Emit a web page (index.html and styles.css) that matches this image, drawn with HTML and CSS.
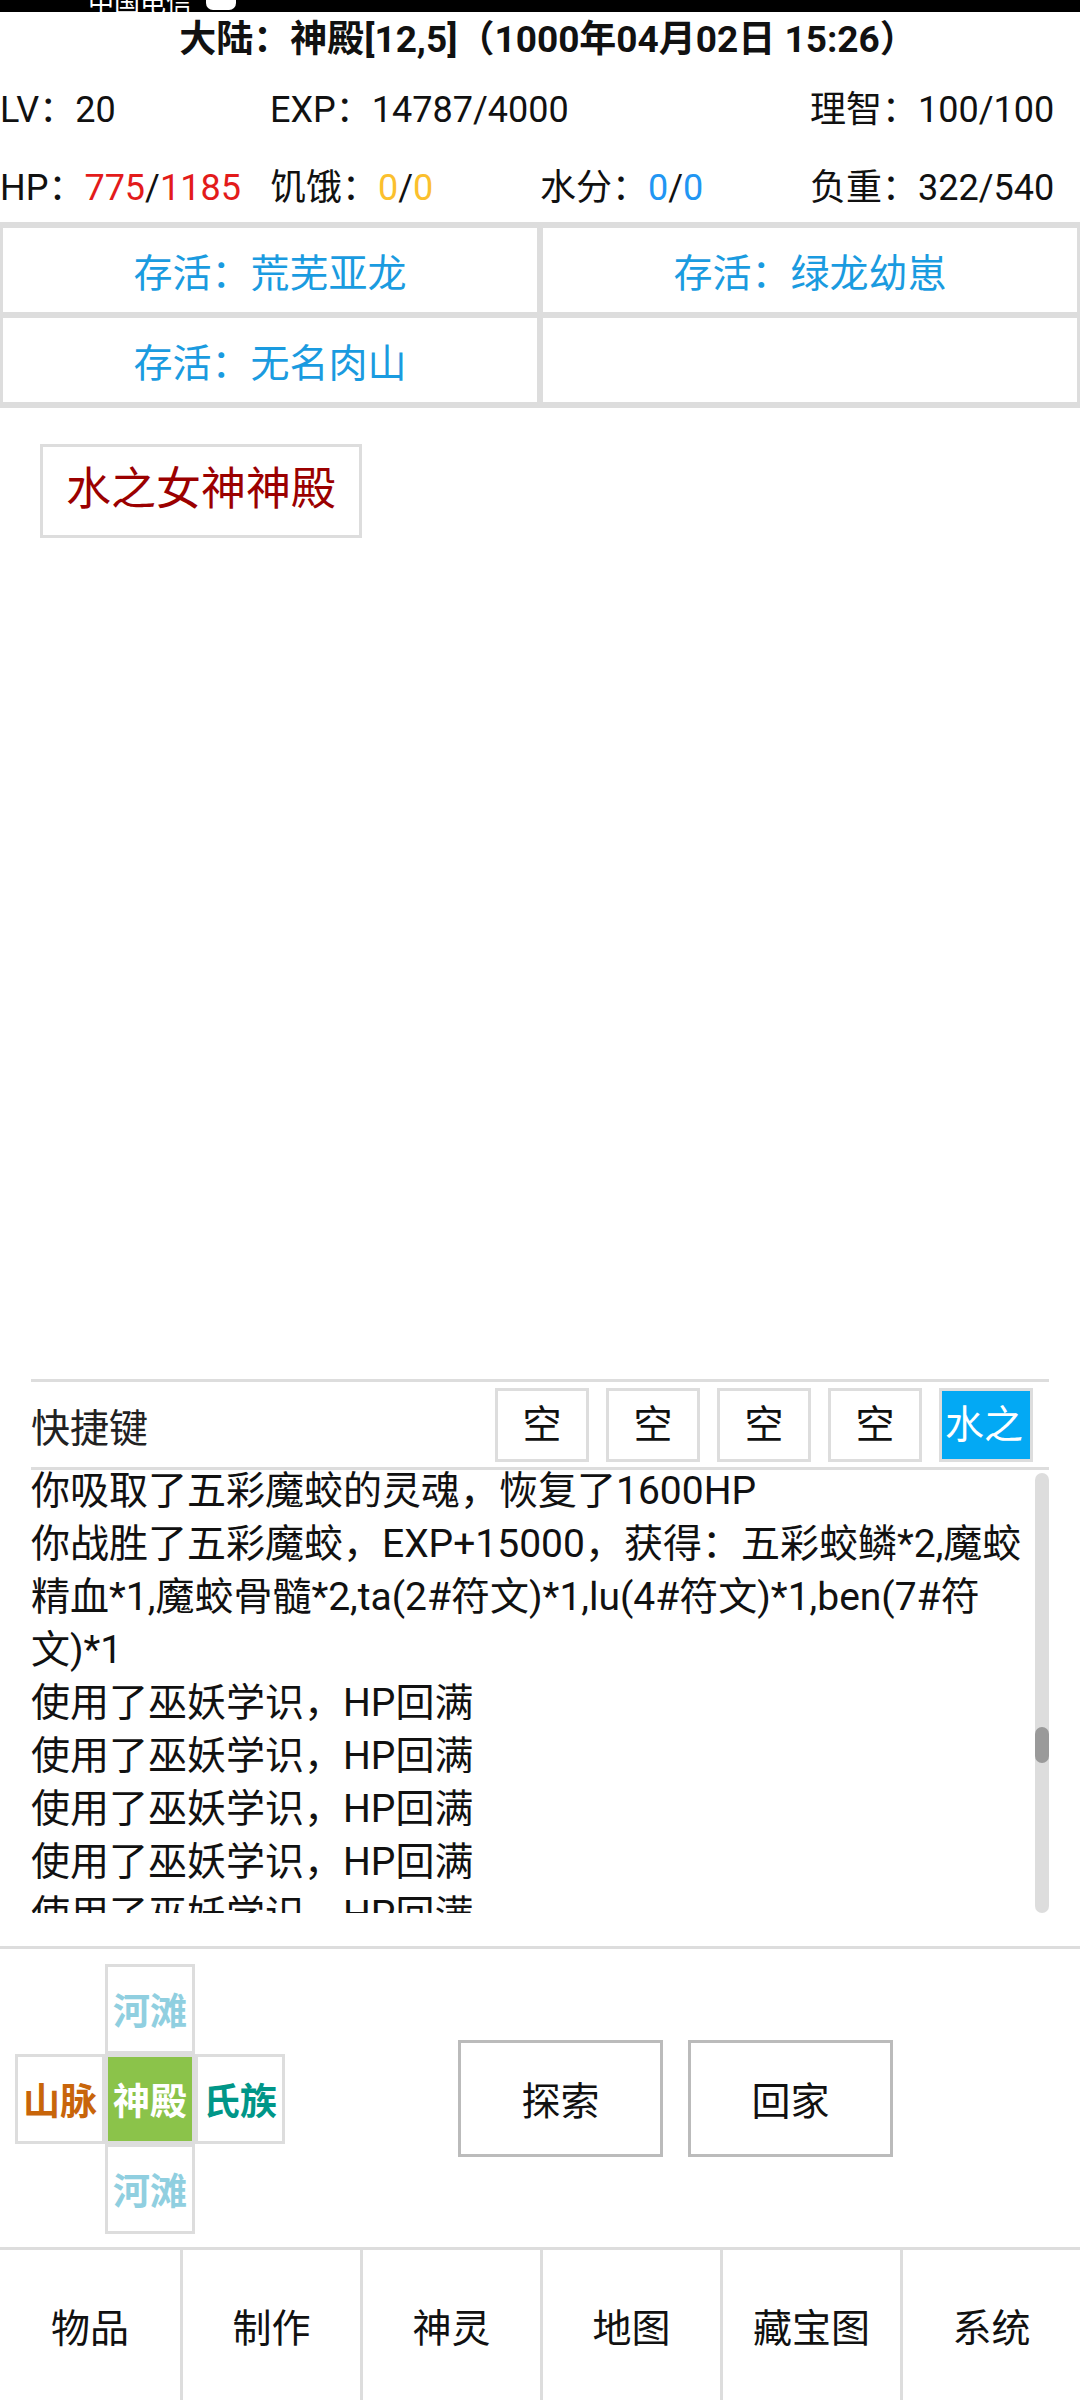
FILE: index.html
```html
<!DOCTYPE html>
<html lang="zh-CN">
<head>
<meta charset="utf-8">
<title>神殿</title>
<link rel="stylesheet" href="styles.css">
</head>
<body>
<div class="page">
  <div class="statusbar"><span class="carrier">中国电信</span><span class="sb-icon"></span></div>
  <h1 class="title">大陆：神殿[12,5]（1000年04月02日 15:26）</h1>
  <div class="stats">
    <div class="stat">LV：20</div>
    <div class="stat">EXP：14787/4000</div>
    <div class="stat"></div>
    <div class="stat">理智：100/100</div>
    <div class="stat">HP：<span class="red">775</span>/<span class="red">1185</span></div>
    <div class="stat">饥饿：<span class="yellow">0</span>/<span class="yellow">0</span></div>
    <div class="stat">水分：<span class="blue">0</span>/<span class="blue">0</span></div>
    <div class="stat">负重：322/540</div>
  </div>
  <div class="alive-grid">
    <div class="alive-cell">存活：荒芜亚龙</div>
    <div class="alive-cell">存活：绿龙幼崽</div>
    <div class="alive-cell">存活：无名肉山</div>
    <div class="alive-cell"></div>
  </div>
  <div class="main">
    <div class="place-btn">水之女神神殿</div>
  </div>
  <div class="quickbar">
    <div class="quick-label">快捷键</div>
    <div class="quick-slots">
      <div class="slot">空</div>
      <div class="slot">空</div>
      <div class="slot">空</div>
      <div class="slot">空</div>
      <div class="slot slot-active"><span class="slot-label">水之女神神殿</span></div>
    </div>
  </div>
  <div class="log">
    <div class="log-text">
      <div class="log-inner">
        <p>你吸取了五彩魔蛟的灵魂，恢复了1600HP</p>
        <p>你战胜了五彩魔蛟，EXP+15000，获得：五彩蛟鳞*2,魔蛟<br>精血*1,魔蛟骨髓*2,ta(2#符文)*1,lu(4#符文)*1,ben(7#符<br>文)*1</p>
        <p>使用了巫妖学识，HP回满</p>
        <p>使用了巫妖学识，HP回满</p>
        <p>使用了巫妖学识，HP回满</p>
        <p>使用了巫妖学识，HP回满</p>
        <p>使用了巫妖学识，HP回满</p>
        <p>使用了巫妖学识，HP回满</p>
      </div>
    </div>
    <div class="scroll-track"><div class="scroll-thumb"></div></div>
  </div>
  <div class="bottom">
    <div class="pad">
      <div class="cell empty"></div>
      <div class="cell beach">河滩</div>
      <div class="cell empty"></div>
      <div class="cell mountain">山脉</div>
      <div class="cell current">神殿</div>
      <div class="cell clan">氏族</div>
      <div class="cell empty"></div>
      <div class="cell beach">河滩</div>
      <div class="cell empty"></div>
    </div>
    <div class="actions">
      <div class="action">探索</div>
      <div class="action">回家</div>
    </div>
  </div>
  <div class="nav">
    <div class="nav-item">物品</div>
    <div class="nav-item">制作</div>
    <div class="nav-item">神灵</div>
    <div class="nav-item">地图</div>
    <div class="nav-item">藏宝图</div>
    <div class="nav-item">系统</div>
  </div>
</div>
</body>
</html>
```
FILE: styles.css
```css
* { box-sizing: border-box; }
html, body { margin: 0; padding: 0; background: #fff; }
body {
  font-family: Roboto, "Noto Sans CJK SC", sans-serif;
  font-size: 39px;
  color: #111;
}
.page {
  width: 1080px;
  height: 2400px;
  display: flex;
  flex-direction: column;
  overflow: hidden;
}
.statusbar {
  height: 12px;
  flex: none;
  background: #000;
  display: flex;
  align-items: flex-end;
  overflow: hidden;
  padding-left: 88px;
  gap: 14px;
}
.carrier {
  color: #fff;
  font-size: 26px;
  line-height: 22px;
  font-family: "Noto Sans CJK SC", sans-serif;
  flex: none;
}
.sb-icon {
  flex: none;
  width: 30px;
  height: 30px;
  border-radius: 7px;
  background: #fff;
  margin-bottom: 2px;
}
.title {
  margin: 0;
  flex: none;
  font-size: 37px;
  font-weight: 700;
  line-height: 56px;
  text-align: center;
  padding-left: 16px;
  color: #111;
}
.stats {
  flex: none;
  display: grid;
  grid-template-columns: repeat(4, 270px);
  row-gap: 28px;
  padding: 17px 0 9px;
  font-size: 36px;
}
.stat {
  line-height: 50px;
  height: 50px;
  white-space: nowrap;
}
.red { color: #e31b1b; }
.yellow { color: #fbc02d; }
.blue { color: #2196f3; }

.alive-grid {
  flex: none;
  display: grid;
  grid-template-columns: 540px 540px;
  border-top: 3px solid #ddd;
  border-bottom: 3px solid #ddd;
}
.alive-cell {
  height: 90px;
  border: 3px solid #ddd;
  color: #1a9be0;
  display: flex;
  align-items: center;
  justify-content: center;
}

.main {
  flex: 1;
  padding: 36px 0 0 40px;
}
.place-btn {
  display: inline-block;
  border: 3px solid #ddd;
  height: 94px;
  line-height: 86px;
  padding: 0 23px;
  font-size: 45px;
  color: #9b0000;
}

.quickbar {
  flex: none;
  margin: 0 31px;
  height: 91px;
  border-top: 3px solid #ddd;
  border-bottom: 3px solid #ddd;
  display: flex;
  align-items: center;
  justify-content: space-between;
  padding-right: 16px;
}
.quick-label { color: #222; }
.quick-slots {
  display: flex;
  gap: 17px;
}
.slot {
  width: 94px;
  height: 74px;
  border: 3px solid #ddd;
  line-height: 68px;
  text-align: center;
  white-space: nowrap;
  overflow: hidden;
  color: #111;
}
.slot-active {
  background: #03a9f4;
  color: #fff;
  text-align: left;
  padding-left: 3px;
}
.slot-label {
  display: inline-block;
  width: 78px;
  overflow: hidden;
  vertical-align: top;
}

.log {
  flex: none;
  height: 443px;
  margin: 0 31px 33px;
  display: flex;
}
.log-text {
  flex: 1;
  overflow: hidden;
}
.log-inner {
  margin-top: -5px;
}
.log-inner p {
  margin: 0;
  line-height: 53px;
  white-space: nowrap;
  color: #111;
}
.scroll-track {
  flex: none;
  width: 14px;
  margin-top: 3px;
  border-radius: 7px;
  background: #ddd;
}
.scroll-thumb {
  margin-top: 254px;
  height: 36px;
  border-radius: 7px;
  background: #9a9a9a;
}

.bottom {
  flex: none;
  height: 301px;
  border-top: 3px solid #ddd;
  display: flex;
  align-items: center;
  padding-left: 15px;
}
.pad {
  display: grid;
  grid-template-columns: repeat(3, 90px);
  grid-template-rows: repeat(3, 90px);
  margin-top: 2px;
}
.cell {
  border: 3px solid #ddd;
  display: flex;
  align-items: center;
  justify-content: center;
  font-size: 37px;
  line-height: 1;
  font-weight: 700;
  white-space: nowrap;
  font-family: "Noto Sans CJK SC", sans-serif;
}
.cell.empty { border: none; }
.beach { color: #90cfe0; }
.mountain { color: #c8650a; }
.clan { color: #009688; }
.current { background: #8bc34a; color: #fff; }

.actions {
  flex: 1;
  display: flex;
  justify-content: center;
  gap: 25px;
  padding-right: 14px;
}
.action {
  width: 205px;
  height: 117px;
  border: 3px solid #bbb;
  display: flex;
  align-items: center;
  justify-content: center;
  color: #111;
}

.nav {
  flex: none;
  height: 153px;
  border-top: 3px solid #ddd;
  display: flex;
}
.nav-item {
  width: 180px;
  display: flex;
  align-items: center;
  justify-content: center;
  border-left: 3px solid #ddd;
  color: #111;
}
.nav-item:first-child { border-left: none; }
```
